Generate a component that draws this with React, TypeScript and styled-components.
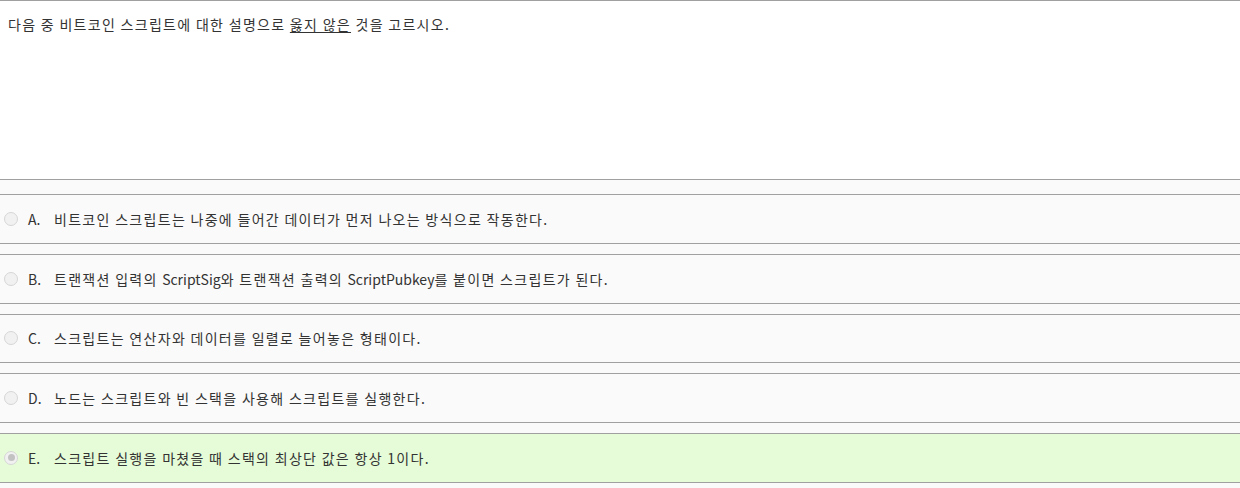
import React from "react";
import styled, { createGlobalStyle } from "styled-components";

const GlobalStyle = createGlobalStyle`
  html, body {
    margin: 0;
    padding: 0;
    background: #ffffff;
  }
  body {
    font-family: "Noto Sans CJK KR", "Noto Sans", sans-serif;
    font-size: 14px;
    letter-spacing: 1.3px;
    color: #333333;
  }
`;

const Page = styled.div`
  width: 1240px;
  height: 488px;
  overflow: hidden;
  background: #fafafa;
`;

const Question = styled.div`
  height: 178px;
  box-sizing: content-box;
  border-top: 1px solid #a0a0a0;
  border-bottom: 1px solid #a0a0a0;
  background: #ffffff;
  padding: 0 8px;
`;

const QuestionText = styled.p`
  margin: 0;
  padding-top: 13px;
  line-height: 20px;
`;

const Underlined = styled.span`
  text-decoration: underline;
  text-underline-offset: 2px;
`;

const Options = styled.div`
  display: flex;
  flex-direction: column;
  gap: 10px;
  padding-top: 14px;
`;

const OptionRow = styled.label<{ $selected?: boolean }>`
  display: flex;
  align-items: center;
  height: 47.75px;
  border-top: 1px solid #a0a0a0;
  border-bottom: 1px solid #a0a0a0;
  background: ${({ $selected }) => ($selected ? "#e6fcd8" : "#fafafa")};
  padding-left: 4px;
`;

const Radio = styled.span<{ $checked?: boolean }>`
  position: relative;
  flex: none;
  width: 12px;
  height: 12px;
  border: 1px solid #d6d6d6;
  border-radius: 50%;
  background: #f1f1f1;

  &::after {
    content: "";
    display: ${({ $checked }) => ($checked ? "block" : "none")};
    position: absolute;
    left: 2.5px;
    top: 2.5px;
    width: 7px;
    height: 7px;
    border-radius: 50%;
    background: #c2c2c2;
  }
`;

const Letter = styled.span`
  width: 26px;
  margin-left: 10px;
  flex: none;
  letter-spacing: 0;
`;

const Answer = styled.span`
  line-height: 20px;
`;

const Latin = styled.span`
  letter-spacing: 0;
`;

const options = [
  "비트코인 스크립트는 나중에 들어간 데이터가 먼저 나오는 방식으로 작동한다.",
  "트랜잭션 입력의 ScriptSig와 트랜잭션 출력의 ScriptPubkey를 붙이면 스크립트가 된다.",
  "스크립트는 연산자와 데이터를 일렬로 늘어놓은 형태이다.",
  "노드는 스크립트와 빈 스택을 사용해 스크립트를 실행한다.",
  "스크립트 실행을 마쳤을 때 스택의 최상단 값은 항상 1이다.",
];

const letters = ["A.", "B.", "C.", "D.", "E."];

// latin words are set tighter than the hangul around them
const renderText = (text: string) =>
  text
    .split(/([A-Za-z]+)/)
    .map((part, i) => (/^[A-Za-z]+$/.test(part) ? <Latin key={i}>{part}</Latin> : part));

const App: React.FC = () => {
  const selected = 4;

  return (
    <>
      <GlobalStyle />
      <Page>
        <Question>
          <QuestionText>
            다음 중 비트코인 스크립트에 대한 설명으로 <Underlined>옳지 않은</Underlined> 것을
            고르시오.
          </QuestionText>
        </Question>
        <Options>
          {options.map((text, i) => (
            <OptionRow key={letters[i]} $selected={i === selected}>
              <Radio $checked={i === selected} />
              <Letter>{letters[i]}</Letter>
              <Answer>{renderText(text)}</Answer>
            </OptionRow>
          ))}
        </Options>
      </Page>
    </>
  );
};

export default App;
